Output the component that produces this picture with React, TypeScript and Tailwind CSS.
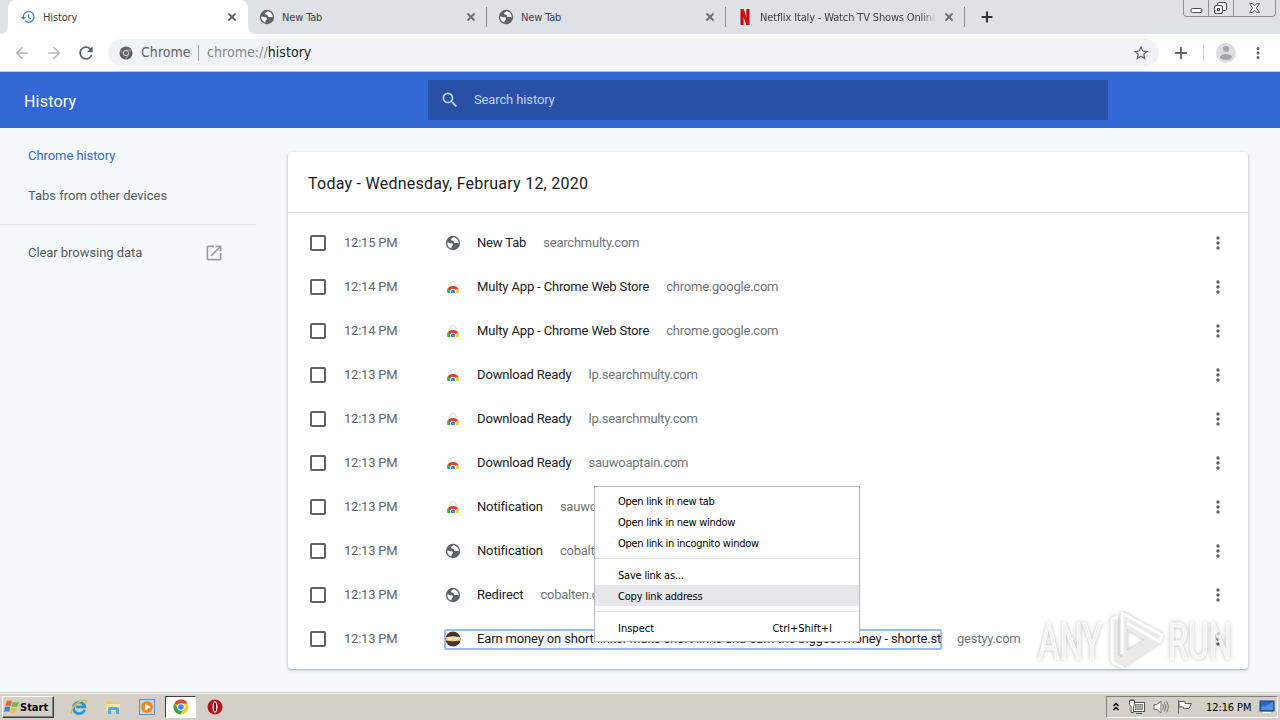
import { X, Plus, ArrowLeft, ArrowRight } from "lucide-react";
import { MdRefresh, MdSearch, MdOpenInNew, MdMoreVert, MdStarBorder, MdHistory } from "react-icons/md";

type IconName = "globe" | "store" | "ninja";

const entries: { time: string; icon: IconName; title: string; domain: string; focused?: boolean }[] = [
  { time: "12:15 PM", icon: "globe", title: "New Tab", domain: "searchmulty.com" },
  { time: "12:14 PM", icon: "store", title: "Multy App - Chrome Web Store", domain: "chrome.google.com" },
  { time: "12:14 PM", icon: "store", title: "Multy App - Chrome Web Store", domain: "chrome.google.com" },
  { time: "12:13 PM", icon: "store", title: "Download Ready", domain: "lp.searchmulty.com" },
  { time: "12:13 PM", icon: "store", title: "Download Ready", domain: "lp.searchmulty.com" },
  { time: "12:13 PM", icon: "store", title: "Download Ready", domain: "sauwoaptain.com" },
  { time: "12:13 PM", icon: "store", title: "Notification", domain: "sauwoaptain.com" },
  { time: "12:13 PM", icon: "globe", title: "Notification", domain: "cobalten.com" },
  { time: "12:13 PM", icon: "globe", title: "Redirect", domain: "cobalten.com" },
  {
    time: "12:13 PM",
    icon: "ninja",
    title: "Earn money on short links. Make short links and earn the biggest money - shorte.st",
    domain: "gestyy.com",
    focused: true,
  },
];

const Globe = () => (
  <svg viewBox="0 0 16 16" className="h-4 w-4 shrink-0">
    <circle cx="8" cy="8" r="7.2" fill="#5f6368" />
    <path
      d="M2.2 7.6 C3.5 7.3 4.6 8.3 6 8.3 C7.2 8.3 8.2 8.8 8 10 C7.8 10.9 6.6 10.8 6.5 12 L6.4 13.6 C4 13 2 10.8 2.2 7.6Z M8.2 2.2 C7.6 3.4 6.2 3.2 6.1 4.4 C6 5.5 7.5 5.5 8.3 5.9 C9.1 6.4 8.8 7.7 10 8 C11.2 8.3 12.4 7.6 13.7 8.4 C14 5.6 12.4 3.2 9.6 2.4Z"
      fill="#fff"
    />
  </svg>
);

const Store = () => (
  <svg viewBox="0 0 16 16" className="h-4 w-4 shrink-0">
    <path d="M5.8 5 V3.8 Q5.8 2.4 8 2.4 Q10.2 2.4 10.2 3.8 V5" fill="none" stroke="#d5dae0" strokeWidth="1" />
    <path d="M3 5 H13 L14 14 H2Z" fill="#eceff1" />
    <path d="M2.3 11 A5.8 5 0 0 1 13.6 10.7 L8 11Z" fill="#e33b2e" />
    <path d="M2.3 10.3 Q2 12.4 2.4 14 H6.2 L5.4 10.4 L3.2 9.2Z" fill="#3fa751" />
    <path d="M10.4 10.2 H13.6 Q14.1 12 13.8 14 H9.6Z" fill="#f8ce25" />
    <path d="M5.2 14 V12.6 A2.8 2.8 0 0 1 10.8 12.6 V14Z" fill="#fff" />
    <path d="M5.9 14 V12.7 A2.1 2.1 0 0 1 10.1 12.7 V14Z" fill="#4285e8" />
  </svg>
);

const Ninja = () => (
  <svg viewBox="0 0 16 16" className="h-4 w-4 shrink-0">
    <circle cx="8" cy="8" r="7.6" fill="#493629" />
    <path d="M.7 6 Q8 4.2 15.3 6 V9.4 Q8 11 .7 9.4Z" fill="#f3d18c" />
    <path d="M3 7.5 H6.6 M9.4 7.5 H13" stroke="#fff8df" strokeWidth="1.4" />
    <path d="M2 5.4 Q8 3.7 14 5.4" stroke="#262321" strokeWidth=".8" fill="none" />
  </svg>
);

const favicons = { globe: Globe, store: Store, ninja: Ninja };

const ChromeLogo = ({ mono = false }: { mono?: boolean }) => (
  <svg viewBox="0 0 16 16" className={mono ? "h-3.5 w-3.5" : "h-4 w-4"}>
    <circle cx="8" cy="8" r="7.5" fill={mono ? "#5f6368" : "#f9cf2b"} />
    {!mono && <path d="M8 8 L1.5 4.2 A7.5 7.5 0 0 1 14.5 4.4 H8Z" fill="#df4534" />}
    {!mono && <path d="M1.5 4.2 A7.5 7.5 0 0 0 7.3 15.5 L11 9.7 L8 8 L4.8 9.7Z" fill="#39a455" />}
    {mono && <path d="M8 4.7 H14.4 M5.1 9.6 L2 4.5 M10.9 9.6 L7.8 15" stroke="#d5d8da" strokeWidth=".7" />}
    <circle cx="8" cy="8" r={mono ? 3.3 : 3.7} fill={mono ? "#d5d8da" : "#fff"} />
    <circle cx="8" cy="8" r={mono ? 2.4 : 2.8} fill={mono ? "#5f6368" : "#4285f4"} />
  </svg>
);

const Netflix = () => (
  <svg viewBox="0 0 16 16" className="h-4 w-4 shrink-0">
    <path d="M3.5 0 H6.6 V16 H3.5Z M9.4 0 H12.5 V16 H9.4Z" fill="#c4060f" />
    <path d="M3.5 0 H6.6 L12.5 16 H9.4Z" fill="#e50914" />
  </svg>
);

const TabStrip = () => (
  <div className="relative flex h-[34px] items-stretch bg-[#dee1e6] text-[11px] tracking-[-0.15px] text-[#3c4043]">
    <div className="w-2 bg-white">
      <div className="h-full rounded-br-lg bg-[#dee1e6]" />
    </div>
    <div className="flex w-[240px] items-center rounded-t-lg bg-white pl-3 pr-2.5">
      <MdHistory className="h-4 w-4 text-[#3c78d8]" />
      <span className="ml-[7px] flex-1 pt-0.5">History</span>
      <X className="h-3 w-3 text-[#5f6368]" strokeWidth={3.6} />
    </div>
    <div className="w-2 bg-white">
      <div className="h-full rounded-bl-lg bg-[#dee1e6]" />
    </div>
    <div className="flex w-[230px] items-center pl-[3px] pr-[9px]">
      <Globe />
      <span className="ml-[7px] flex-1 pt-0.5">New Tab</span>
      <X className="h-3 w-3 text-[#6b6f74]" strokeWidth={3.6} />
    </div>
    <div className="flex w-[239px] items-center pr-[9px]">
      <div className="mr-[11px] h-5 w-px bg-[#8b8f94]" />
      <Globe />
      <span className="ml-[7px] flex-1 pt-0.5">New Tab</span>
      <X className="h-3 w-3 text-[#6b6f74]" strokeWidth={3.6} />
    </div>
    <div className="flex w-[239px] items-center pr-[9px]">
      <div className="mr-[11px] h-5 w-px bg-[#8b8f94]" />
      <Netflix />
      <span className="ml-[7px] w-[176px] overflow-hidden whitespace-nowrap pt-0.5 [mask-image:linear-gradient(to_right,#000_92%,transparent)]">
        Netflix Italy - Watch TV Shows Online
      </span>
      <X className="ml-auto h-3 w-3 shrink-0 text-[#6b6f74]" strokeWidth={3.6} />
    </div>
    <div className="flex items-center">
      <div className="mr-[14px] h-5 w-px bg-[#8b8f94]" />
      <Plus className="h-4 w-4 text-[#303337]" strokeWidth={3} />
    </div>
    <div className="absolute right-[4px] top-0 flex h-[17px] w-[93px] rounded-b border border-t-0 border-[#8d9199] text-[#4b5057]">
      <svg viewBox="0 0 91 16" className="h-4 w-[91px]" fill="none" stroke="currentColor">
        <path d="M24.5 0 V16 M49.5 0 V16" stroke="#8d9199" />
        <rect x="7" y="8.5" width="11" height="4" rx="1.5" fill="#fff" />
        <rect x="33.5" y="2.5" width="9" height="8" rx="1.5" fill="#f4f5f7" />
        <rect x="30.5" y="5.5" width="8" height="8" rx="1.5" fill="#fff" />
        <rect x="33.5" y="8.5" width="2" height="2" />
        <path d="M65.5 3.5 H68.5 L70.5 6 L72.5 3.5 H75.5 L72.5 8 L75.5 12.5 H72.5 L70.5 10 L68.5 12.5 H65.5 L68.5 8Z" fill="#fff" strokeWidth=".8" />
      </svg>
    </div>
  </div>
);

const Toolbar = () => (
  <div className="flex h-[38px] items-center border-b border-[#bcc8da] bg-white pl-[13px] pr-[13px] text-[#5f6368]">
    <ArrowLeft className="h-[18px] w-[18px] text-[#b6b8bb]" strokeWidth={2.3} />
    <ArrowRight className="ml-[14px] h-[18px] w-[18px] text-[#b6b8bb]" strokeWidth={2.3} />
    <MdRefresh className="ml-[13px] h-5 w-5" />
    <div className="ml-3 flex h-[27px] w-[1051px] items-center rounded-full bg-[#f0f3f5] pl-[11px] pr-[9px] text-[14px]">
      <ChromeLogo mono />
      <span className="ml-2 w-[50px] whitespace-nowrap tracking-[0.05px] text-[#5f6368]">Chrome</span>
      <div className="ml-[7px] h-4 w-px bg-[#9aa0a6]" />
      <span className="ml-2 flex-1 tracking-[0.05px] text-[#80868b]">
        chrome://<span className="text-[#202124]">history</span>
      </span>
      <MdStarBorder className="h-[18px] w-[18px]" />
    </div>
    <Plus className="ml-[13px] h-[18px] w-[18px]" strokeWidth={2.5} />
    <div className="ml-[13px] h-4 w-px bg-[#d0d3d7]" />
    <svg viewBox="0 0 20 20" className="ml-3 h-5 w-5">
      <circle cx="10" cy="10" r="10" fill="#dcdddf" />
      <circle cx="10" cy="6" r="3" fill="#a3a5a8" />
      <ellipse cx="10" cy="14" rx="6" ry="3" fill="#a3a5a8" />
    </svg>
    <MdMoreVert className="ml-auto h-[18px] w-[18px]" />
  </div>
);

const PageHeader = () => (
  <header className="flex h-14 items-center bg-[#3367d6] pl-6 font-[Roboto,sans-serif] text-white">
    <h1 className="w-[404px] pt-[3px] text-[16px] tracking-[0.2px]">History</h1>
    <div className="flex h-10 w-[680px] items-center bg-[#2850a7] pl-3 text-[13px] text-[#c3d2f2]">
      <MdSearch className="h-5 w-5" />
      <span className="ml-3.5 tracking-[-0.13px]">Search history</span>
    </div>
  </header>
);

const Sidebar = () => (
  <nav className="w-64 pt-2 text-[13px] tracking-[-0.06px] text-[#55595e]">
    <div className="flex h-10 items-center pl-7 text-[#3367d6]">Chrome history</div>
    <div className="flex h-10 items-center pl-7 tracking-[-0.02px]">Tabs from other devices</div>
    <div className="mt-2 flex h-[57px] items-center border-t border-[#e0e3e7] pl-7 pr-8">
      <span className="flex-1">Clear browsing data</span>
      <MdOpenInNew className="h-5 w-5 text-[#9b9fa4]" />
    </div>
  </nav>
);

const HistoryCard = () => (
  <section className="ml-8 mt-6 h-[517px] w-[960px] rounded bg-white shadow-[0_1px_3px_rgba(60,64,67,0.45)]">
    <h2 className="flex h-[61px] items-center border-b border-[#d8dadd] pl-5 pt-[3px] text-[16px] tracking-[0.25px] text-[#202124]">
      Today - Wednesday, February 12, 2020
    </h2>
    <div className="pt-2 text-[13px]">
      {entries.map((entry, i) => {
        const Favicon = favicons[entry.icon];
        return (
          <div key={i} className="flex h-11 items-center pl-[22px] pr-5">
            <div className="h-4 w-4 rounded-xs border-2 border-[#5f6368]" />
            <span className="ml-[18px] w-[100px] tracking-[-0.22px] text-[#5f6368]">{entry.time}</span>
            <div
              className={
                entry.focused
                  ? "flex h-[21px] w-[498px] items-center rounded-xs border-2 border-[#9bbcf0]"
                  : "flex h-[21px] items-center border-2 border-transparent"
              }
            >
              <div className="-ml-px flex">
                <Favicon />
              </div>
              <span className="ml-4 whitespace-nowrap tracking-[-0.15px] text-[#202124]">{entry.title}</span>
            </div>
            <span className="ml-[15px] flex-1 tracking-[-0.23px] text-[#70757a]">{entry.domain}</span>
            <MdMoreVert className="h-5 w-5 text-[#5f6368]" />
          </div>
        );
      })}
    </div>
  </section>
);

const ContextMenu = () => (
  <div className="absolute left-[594px] top-[486px] h-[156px] w-[266px] border border-[#b6b8bb] bg-white pt-1 text-[11px] tracking-[-0.28px] text-black">
    <div className="flex h-[21px] items-center pl-[23px] pt-0.5">Open link in new tab</div>
    <div className="flex h-[21px] items-center pl-[23px] pt-0.5">Open link in new window</div>
    <div className="flex h-[21px] items-center pl-[23px] pt-0.5">Open link in incognito window</div>
    <div className="mb-[5px] mt-1 h-px bg-[#e2e3e5]" />
    <div className="flex h-[21px] items-center pl-[23px] pt-[3px] tracking-[-0.2px]">Save link as...</div>
    <div className="flex h-[21px] items-center bg-[#e8e8ec] pl-[23px] pt-[3px] tracking-[-0.2px]">Copy link address</div>
    <div className="mb-[6px] mt-[5px] h-px bg-[#e2e3e5]" />
    <div className="flex h-[21px] items-center justify-between pl-[23px] pr-[27px] pt-0.5 tracking-[0px]">
      <span>Inspect</span>
      <span>Ctrl+Shift+I</span>
    </div>
  </div>
);

const Watermark = () => (
  <svg
    viewBox="0 0 200 68"
    className="absolute left-[1036px] top-[605px] h-[68px] w-[200px] opacity-75 drop-shadow-[0_0_2px_rgba(0,0,0,0.35)]"
  >
    <g fontFamily="Roboto, sans-serif" fontSize="50" fill="#f0f0f0" stroke="#fff" strokeWidth=".8">
      <text x="2" y="54" textLength="64" lengthAdjust="spacingAndGlyphs">ANY</text>
      <text x="132" y="54" textLength="64" lengthAdjust="spacingAndGlyphs">RUN</text>
    </g>
    <path
      d="M86 7 L127 30 L125 37 L87 62 L75 57 V14 L82 11 V50 L86 52Z M91 24 V46 L109 35Z"
      fill="#e4e4e5"
      fillRule="evenodd"
    />
    <path
      d="M76 57 V14 L82 12 M86 49 V8 L126 30 L124 37 L91 18 M76 57 L88 63"
      fill="none"
      stroke="#fff"
      strokeWidth="3"
      strokeLinejoin="round"
    />
  </svg>
);

const Taskbar = () => (
  <footer className="flex h-7 items-center border-t border-[#d4d0c8] bg-[#d4d0c8] pl-[2px] shadow-[inset_0_1px_0_#fff]">
    <div className="mt-px flex h-[22px] w-[52px] items-center border border-b-[#404040] border-l-white border-r-[#404040] border-t-white pl-px text-[11px] font-bold text-black shadow-[inset_-1px_-1px_0_#808080]">
      <svg viewBox="0 0 16 16" className="h-4 w-4 shrink-0">
        <path d="M2.5 2.5 Q5 .8 7.8 2.3 L6.7 7 Q4.2 5.8 1.3 7.2Z" fill="#e8652b" />
        <path d="M8.7 2.8 Q11.5 4.3 15 2.6 L13.7 7.3 Q10.6 8.8 7.6 7.4Z" fill="#79b642" />
        <path d="M1 8.3 Q4 6.7 6.4 8.1 L5.2 12.8 Q2.7 11.5 0 13Z" fill="#3c83cf" />
        <path d="M7.3 8.5 Q10.3 9.9 13.4 8.4 L12 13.1 Q9 14.6 6 13.2Z" fill="#f3bf31" />
      </svg>
      <span className="pt-0.5">Start</span>
    </div>
    <div className="ml-4 mt-px flex items-center">
      <svg viewBox="0 0 18 18" className="h-[18px] w-[18px]">
        <path d="M14.6 11.8 A5.7 5.7 0 1 1 14.8 8.9 H6" fill="none" stroke="#2995d5" strokeWidth="2.7" />
        <path d="M2 15.5 C-1 12 8 2 15.5 2.2 Q17.5 3 15.5 6" fill="none" stroke="#e8bf3a" strokeWidth="1.4" />
      </svg>
      <svg viewBox="0 0 18 18" className="ml-4 h-[18px] w-[18px]">
        <path d="M2 3 H7 L8.5 4.5 H15 V13 H2Z" fill="#eec965" />
        <path d="M3 6 H16 V13 H2Z" fill="#f9e6a0" />
        <path d="M4 16 V11 Q4 9 6 9 H13 Q15 9 15 11 V16 H12 V12 H7 V16Z" fill="#55a9d8" />
      </svg>
      <svg viewBox="0 0 18 18" className="ml-4 h-[18px] w-[18px]">
        <rect x="1.5" y="1.5" width="15" height="15" fill="#bcdcf2" stroke="#4f91c8" />
        <circle cx="9" cy="9" r="6" fill="#f18a1d" />
        <path d="M7 5.5 L12.5 9 L7 12.5Z" fill="#fff" />
      </svg>
    </div>
    <div className="ml-[9px] mt-px flex h-[22px] w-[31px] items-center justify-center border border-b-white border-l-[#404040] border-r-white border-t-[#404040] bg-white">
      <ChromeLogo />
    </div>
    <svg viewBox="0 0 16 16" className="ml-[11px] mt-px h-4 w-4">
      <circle cx="8" cy="8" r="7.5" fill="#b5121b" />
      <ellipse cx="8" cy="8" rx="2.5" ry="5.7" fill="#fff" />
      <ellipse cx="8" cy="8" rx="1.2" ry="4.8" fill="#8c1117" />
    </svg>
    <div className="ml-auto mr-0.5 mt-px flex h-[22px] w-[172px] items-center border border-b-white border-l-[#808080] border-r-white border-t-[#808080] pl-[5px] text-[11px] tracking-[-0.1px] text-black">
      <svg viewBox="0 0 8 12" className="h-3 w-2" fill="none" stroke="#000" strokeWidth="1.3">
        <path d="M1.5 5 L4 2.5 L6.5 5 M1.5 9 L4 6.5 L6.5 9" />
      </svg>
      <svg viewBox="0 0 18 18" className="ml-2 h-[18px] w-[18px]" fill="#f3f2ef" stroke="#55534f">
        <rect x="5.5" y="4.5" width="11" height="9" fill="#fff" />
        <rect x="7.5" y="6.5" width="7" height="5" fill="#aaa9a5" stroke="#8b8984" />
        <path d="M8 15.5 H14 M1.5 2.5 H6.5 V6.5 L5.5 8.5 V14.5 H3 V8.5 L1.5 6.5Z M3 1 V3 M5 1 V3" />
      </svg>
      <svg viewBox="0 0 18 18" className="ml-1.5 h-[18px] w-[18px]" fill="none" stroke="#77756f">
        <path d="M2 6.5 H5 L9 3 V15 L5 11.5 H2Z" fill="#fff" />
        <path d="M11 6.5 Q12.5 9 11 11.5 M12.5 4.5 Q15 9 12.5 13.5 M14.5 3.5 Q18 9 14.5 14.5" />
      </svg>
      <svg viewBox="0 0 18 18" className="ml-[5px] h-[18px] w-[18px]" fill="#fff" stroke="#666560">
        <path d="M3.5 2 V16 M4 3.5 H10 V5.5 H16.5 L14 10.5 H8.5 V9 H4Z" />
      </svg>
      <span className="ml-[13px] w-[46px] whitespace-nowrap pt-0.5">12:16 PM</span>
      <svg viewBox="0 0 16 16" className="ml-[7px] h-4 w-4">
        <rect x="1" y="2" width="14" height="10" fill="#296ac3" stroke="#163b77" />
        <path d="M2 8 Q8 7 14 3 V11 H2Z" fill="#4e91dd" />
        <path d="M4 13.5 H12" stroke="#fff" />
      </svg>
    </div>
  </footer>
);

export default function App() {
  return (
    <div className="relative flex h-[720px] w-[1280px] flex-col overflow-hidden bg-[#f6f9fc] font-['DejaVu_Sans_Condensed','DejaVu_Sans',sans-serif]">
      <TabStrip />
      <Toolbar />
      <PageHeader />
      <main className="flex flex-1 font-[Roboto,sans-serif]">
        <Sidebar />
        <HistoryCard />
      </main>
      <Taskbar />
      <ContextMenu />
      <Watermark />
    </div>
  );
}
